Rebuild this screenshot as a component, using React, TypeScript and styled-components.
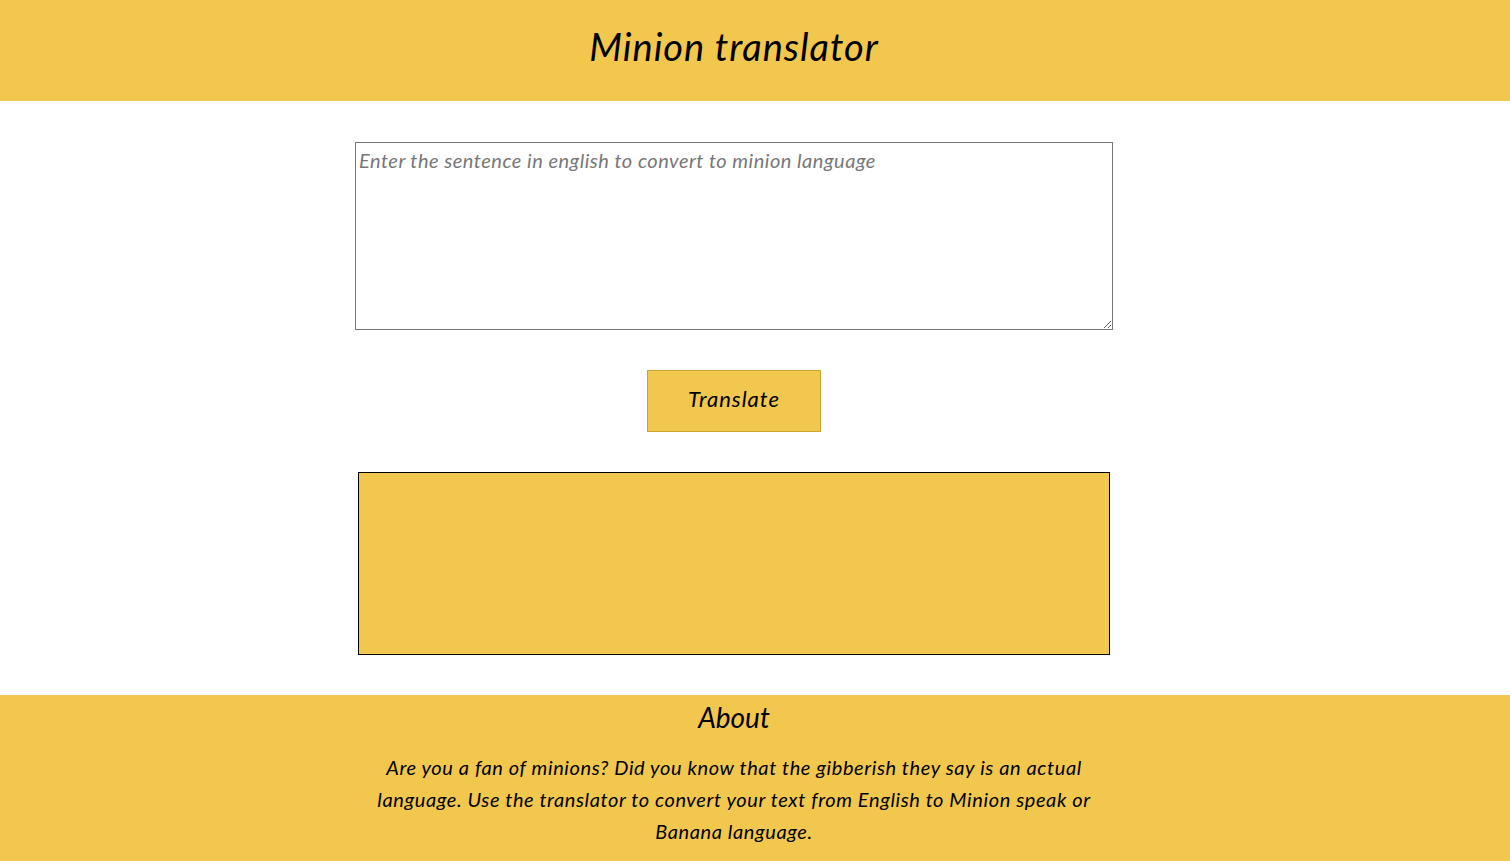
import styled, { createGlobalStyle } from 'styled-components'

const GlobalStyle = createGlobalStyle`
  body {
    margin: 0;
    font-family: Lato, "Open Sans", sans-serif;
    font-style: italic;
    background: #ffffff;
  }
`

const yellow = '#f2c74e'

const Header = styled.header`
  background: ${yellow};
  height: 101px;
  box-sizing: border-box;
  display: flex;
  align-items: center;
  justify-content: center;
  padding: 0 42px 10px 0;
`

const Title = styled.h1`
  margin: 0;
  font-size: 38px;
  font-weight: 400;
  color: #000;
  letter-spacing: 1px;
`

const Main = styled.main`
  display: flex;
  flex-direction: column;
  align-items: center;
  padding: 41px 42px 40px 0;
  gap: 40px;
`

const Input = styled.textarea`
  box-sizing: border-box;
  width: 758px;
  height: 188px;
  border: 1px solid #767676;
  padding: 5px 3px;
  font-family: inherit;
  font-style: italic;
  font-size: 20px;
  letter-spacing: 0.5px;
  color: #000;
  &::placeholder {
    color: #777;
  }
`

const Button = styled.button`
  box-sizing: border-box;
  width: 174px;
  height: 62px;
  padding: 0 0 6px;
  background: ${yellow};
  border: 1px solid #c9a530;
  font-family: inherit;
  font-style: italic;
  font-size: 22px;
  letter-spacing: 1px;
  color: #000;
  cursor: pointer;
`

const Output = styled.div`
  box-sizing: border-box;
  width: 752px;
  height: 183px;
  background: ${yellow};
  border: 1px solid #000;
`

const Footer = styled.footer`
  background: ${yellow};
  display: flex;
  flex-direction: column;
  align-items: center;
  padding: 0 42px 20px 0;
`

const FooterTitle = styled.h2`
  margin: 0;
  font-size: 28px;
  font-weight: 400;
  line-height: 44px;
`

const FooterText = styled.p`
  margin: 12px 0 0;
  max-width: 722px;
  text-align: center;
  font-size: 20px;
  line-height: 32px;
  letter-spacing: 0.6px;
`

export default function App() {
  return (
    <>
      <GlobalStyle />
      <Header>
        <Title>Minion translator</Title>
      </Header>
      <Main>
        <Input placeholder="Enter the sentence in english to convert to minion language" />
        <Button>Translate</Button>
        <Output />
      </Main>
      <Footer>
        <FooterTitle>About</FooterTitle>
        <FooterText>
          Are you a fan of minions? Did you know that the gibberish they say is an actual
          language. Use the translator to convert your text from English to Minion speak or
          Banana language.
        </FooterText>
      </Footer>
    </>
  )
}
